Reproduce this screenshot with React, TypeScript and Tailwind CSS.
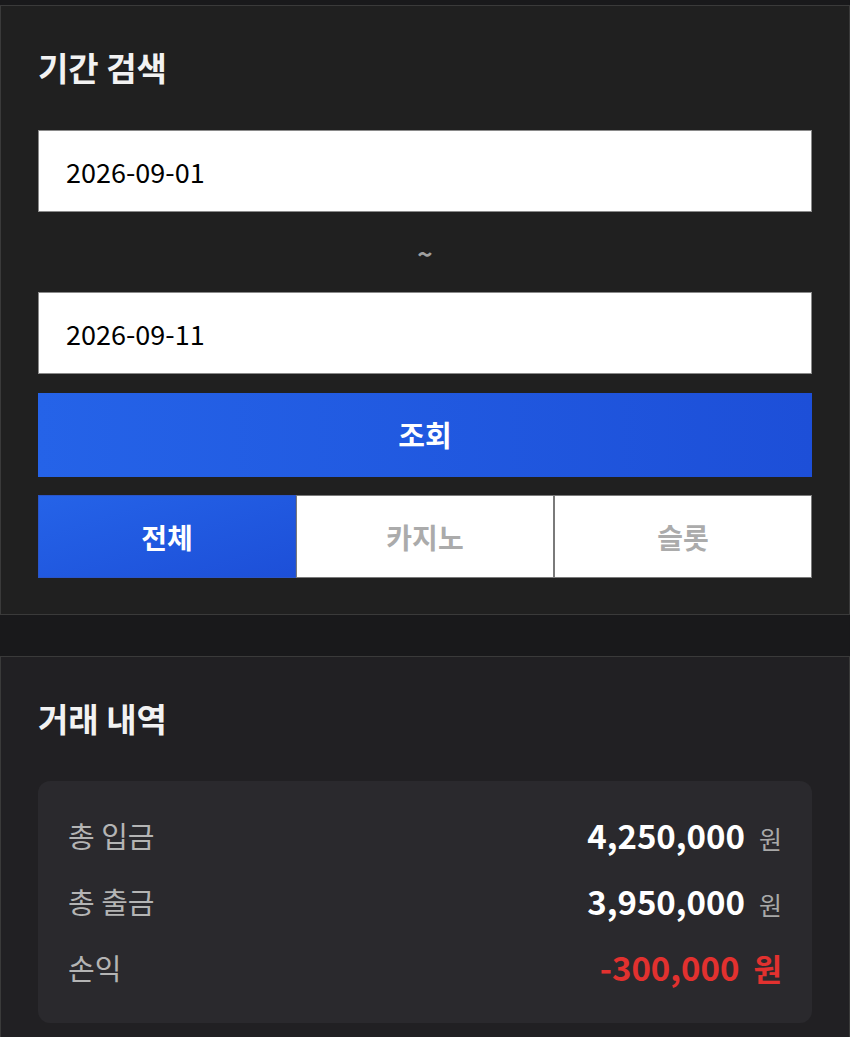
import React, { useState } from 'react';

type Row = {
  label: string;
  value: string;
  negative?: boolean;
};

const rows: Row[] = [
  { label: '총 입금', value: '4,250,000' },
  { label: '총 출금', value: '3,950,000' },
  { label: '손익', value: '-300,000', negative: true },
];

const tabs = ['전체', '카지노', '슬롯'];

export default function App() {
  const [from, setFrom] = useState('2026-09-01');
  const [to, setTo] = useState('2026-09-11');
  const [tab, setTab] = useState(0);

  return (
    <div
      className="min-h-screen bg-[#19191b] pt-[5px] pb-[40px]"
      style={{ fontFamily: '"Noto Sans CJK KR", "Noto Sans", sans-serif' }}
    >
      {/* 기간 검색 */}
      <section className="bg-[#202020] border border-[#3a3a3a] px-[37px] pt-[40px] pb-[36px]">
        <h2 className="text-[33px] leading-[42px] font-bold text-[#f2f2f2] mb-[42px]">기간 검색</h2>

        <input
          value={from}
          onChange={(e) => setFrom(e.target.value)}
          className="block w-full h-[82px] bg-white border border-[#8a8a8a] px-[27px] text-[27px] text-black outline-none"
        />
        <div className="h-[80px] flex items-center justify-center text-[#a0a0a0] text-[26px] font-bold">~</div>
        <input
          value={to}
          onChange={(e) => setTo(e.target.value)}
          className="block w-full h-[82px] bg-white border border-[#8a8a8a] px-[27px] text-[27px] text-black outline-none"
        />

        <button className="mt-[19px] w-full h-[84px] bg-gradient-to-r from-[#2563e8] to-[#1d4fd8] text-white text-[29px] font-bold">
          조회
        </button>

        <div className="mt-[18px] grid grid-cols-3 h-[83px]">
          {tabs.map((t, i) => (
            <button
              key={t}
              onClick={() => setTab(i)}
              className={
                i === tab
                  ? 'bg-gradient-to-br from-[#2563e8] to-[#1d4fd8] border border-[#2a55c8] text-white text-[28px] font-bold'
                  : 'bg-white border border-[#7a7a7a] text-[#ababab] text-[28px] font-bold'
              }
            >
              {t}
            </button>
          ))}
        </div>
      </section>

      {/* 거래 내역 */}
      <section className="mt-[41px] bg-[#212023] border border-[#3a3a3a] border-b-0 px-[37px] pt-[40px] pb-[16px]">
        <h2 className="text-[33px] leading-[42px] font-bold text-[#f2f2f2] mb-[42px]">거래 내역</h2>

        <div className="bg-[#2a292d] rounded-[12px] px-[30px] py-[22px]">
          {rows.map((r) => (
            <div key={r.label} className="h-[66px] flex items-center justify-between">
              <span className="text-[29px] text-[#b4b4b4]">{r.label}</span>
              <span className="flex items-baseline gap-[14px]">
                <span
                  className={
                    r.negative
                      ? 'text-[33px] font-bold text-[#e2312f]'
                      : 'text-[33px] font-bold text-white'
                  }
                >
                  {r.value}
                </span>
                <span
                  className={
                    r.negative
                      ? 'text-[31px] font-bold text-[#e2312f]'
                      : 'text-[25px] text-[#a8a8a8]'
                  }
                >
                  원
                </span>
              </span>
            </div>
          ))}
        </div>
      </section>
    </div>
  );
}
